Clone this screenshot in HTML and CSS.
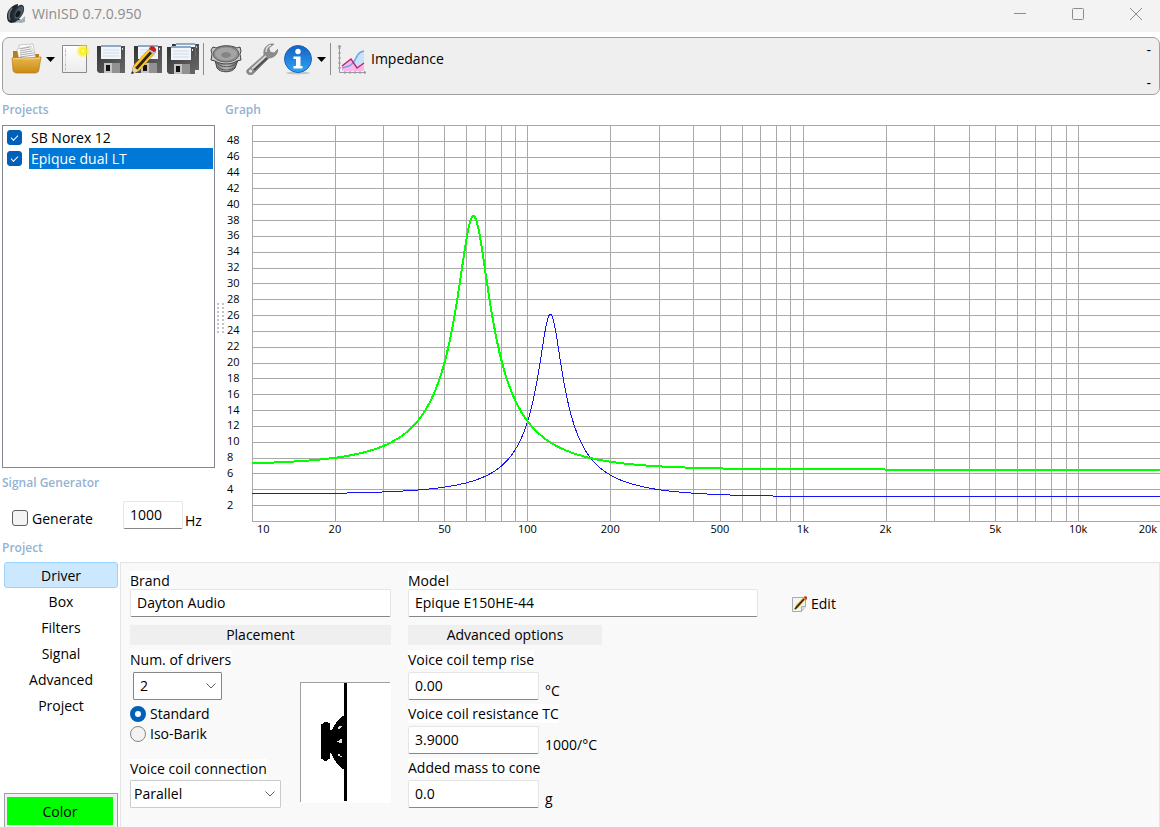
FILE: index.html
```
<!DOCTYPE html>
<html lang="en">
<head>
    <meta charset="UTF-8">
    <meta name="viewport" content="width=device-width, initial-scale=1.0">
    <title>WinISD 0.7.0.950</title>
    <link rel="stylesheet" href="styles.css">
</head>
<body>

    <header class="titlebar">
        <svg class="app-icon" width="20" height="20" viewBox="0 0 20 20">
            <path d="M12 0C6 1 1 6 1 12c0 4 1 6 4 7l7-1 3-2-4-2z" fill="#20262b"/>
            <path d="M6 4C3 7 2 12 4 16" stroke="#5f6e79" stroke-width="2" fill="none"/>
            <ellipse cx="12.500" cy="8.500" rx="4.500" ry="8.500" transform="rotate(28 12.500 8.500)" fill="#2c353d"/>
            <ellipse cx="13" cy="8.500" rx="3.200" ry="7" transform="rotate(28 13 8.500)" fill="#4d5962"/>
            <ellipse cx="12" cy="10" rx="2" ry="3.500" transform="rotate(28 12 10)" fill="#15191c"/>
            <path d="M9 18l3-2 3 0 4-4 0 6-4 1z" fill="#9fb2b1"/>
        </svg>
        <h1>WinISD 0.7.0.950</h1>
        <div class="window-buttons">
            <button aria-label="Minimize"><svg width="14" height="14"><path d="M1 6.500h12" /></svg></button>
            <button aria-label="Maximize"><svg width="14" height="14"><rect x="1.500" y="1.500" width="11" height="11" rx="1"/></svg></button>
            <button aria-label="Close"><svg width="14" height="14"><path d="M1 1l12 12M13 1L1 13"/></svg></button>
        </div>
    </header>

    <svg width="0" height="0" class="defs">
        <defs>
            <linearGradient id="gold" x1="0" y1="0" x2="0" y2="1"><stop offset="0" stop-color="#e9b84e"/><stop offset="1" stop-color="#c98a16"/></linearGradient>
            <linearGradient id="disk" x1="0" y1="0" x2="1" y2="1"><stop offset="0" stop-color="#333"/><stop offset="1" stop-color="#686868"/></linearGradient>
            <linearGradient id="paper" x1="0" y1="0" x2="0" y2="1"><stop offset="0" stop-color="#fff"/><stop offset="1" stop-color="#ececec"/></linearGradient>
            <linearGradient id="info" x1="0" y1="0" x2="0" y2="1"><stop offset="0" stop-color="#1561c0"/><stop offset="1" stop-color="#2fa5f6"/></linearGradient>
            <linearGradient id="metal" x1="0" y1="0" x2="1" y2="0"><stop offset="0" stop-color="#777"/><stop offset=".5" stop-color="#bbb"/><stop offset="1" stop-color="#666"/></linearGradient>
            <radialGradient id="star"><stop offset="0" stop-color="#fffbd0"/><stop offset=".4" stop-color="#fff000"/><stop offset="1" stop-color="#f8ef4a" stop-opacity="0.100"/></radialGradient>
            <symbol id="floppy" viewBox="0 0 28 29">
                <path d="M0 1h28v27H2l-2-2z" fill="url(#disk)"/>
                <path d="M4 0h20v14H4z" fill="#f2f6fb"/>
                <path d="M4 0h20v2H4z" fill="#8fa9c4"/>
                <path d="M6 5h16M6 8h16M6 11h16" stroke="#cfdcea"/>
                <path d="M7 18h16v10H7z" fill="#c4c4c4"/>
                <path d="M15 18h8v10h-8z" fill="#929292"/>
                <path d="M9 20h4v6H9z" fill="#111"/>
                <path d="M25 3h1v2h-1z" fill="#ddd"/>
            </symbol>
        </defs>
    </svg>

    <div class="toolbar">
        <button class="tool" aria-label="Open">
            <svg width="32" height="32" viewBox="0 0 32 32">
                <path d="M2 8h6l2 3h18v16H2z" fill="#b77d17"/>
                <path d="M8 2l14-1 3 16-17 1z" fill="#fff" stroke="#aaa" stroke-width=".600"/>
                <path d="M6 6l14-3 5 13H8z" fill="#fafafa" stroke="#bbb" stroke-width=".600"/>
                <path d="M9 6l10-2M9 8l11-2M9 10l12-2M9 12l13-2M9 14l14-2" stroke="#999" stroke-width=".800"/>
                <path d="M1 15c8-1 11 0 14 0l15-1-2 12c0 3-2 4-4 4H6c-2 0-4-1-4-3z" fill="url(#gold)" stroke="#b57c14" stroke-width=".700"/>
                <path d="M2 16c8-1 11 0 13 0l14-1" stroke="#f5d58c" fill="none"/>
            </svg>
            <svg class="arrow" width="9" height="5"><path d="M0 0h9L4.500 5z"/></svg>
        </button>
        <button class="tool" aria-label="New">
            <svg width="32" height="32" viewBox="0 0 32 32">
                <path d="M3.500 2.500h24v27h-24z" fill="url(#paper)" stroke="#8b8b8b"/>
                <path d="M6.500 5v23" stroke="#ddd"/>
                <path d="M6 8h1M6 12h1M6 22h1M6 26h1" stroke="#999"/>
                <circle cx="24" cy="8" r="7" fill="url(#star)"/>
            </svg>
        </button>
        <button class="tool" aria-label="Save"><svg width="32" height="32"><use href="#floppy" x="2" y="2" width="28" height="29"/></svg></button>
        <button class="tool" aria-label="Save as">
            <svg width="32" height="32" viewBox="0 0 32 32">
                <use href="#floppy" x="3" y="2" width="28" height="29"/>
                <path d="M19 5l6 4L8 28l-7 3 1-8z" fill="#2a2415"/>
                <path d="M19 5l2 1L4 25l-2-2zM23 8l2 1L8 28l-2-1z" fill="#ffc629"/>
                <path d="M2 23l6 5-7 3z" fill="#edd09a"/>
                <path d="M1 28l2 2-3 1z" fill="#222"/>
                <path d="M17 7l6 5 2-3-6-5z" fill="#b9bdbd"/>
                <path d="M19 4c2-3 7 1 6 4l-2 1-5-3z" fill="#cf1d1d"/>
            </svg>
        </button>
        <button class="tool" aria-label="Save all">
            <svg width="32" height="32" viewBox="0 0 32 32">
                <use href="#floppy" x="5" y="0" width="27" height="28"/>
                <use href="#floppy" x="0" y="3" width="28" height="29"/>
            </svg>
        </button>
        <span class="separator"></span>
        <button class="tool" aria-label="Driver database">
            <svg width="32" height="32" viewBox="0 0 32 32">
                <path d="M5 17l2 8c3 5 15 5 18 0l3-8z" fill="url(#metal)" stroke="#444"/>
                <path d="M7 20c4 5 15 5 19 0M8 24c4 4 13 4 17 0" fill="none" stroke="#555"/>
                <path d="M3 4l3 1C12 2 21 2 27 5l3-1 1 4-1 3 1 6-4 1c-6 4-16 4-22 0l-4-1 1-6-1-4z" fill="#c8c8c8" stroke="#444"/>
                <ellipse cx="16" cy="11" rx="13" ry="8" fill="#8a8a8a" stroke="#666"/>
                <ellipse cx="16" cy="11" rx="11" ry="6.500" fill="#a4a4a4"/>
                <ellipse cx="16" cy="12" rx="5" ry="3" fill="#858585"/>
            </svg>
        </button>
        <button class="tool" aria-label="Options">
            <svg width="32" height="32" viewBox="0 0 32 32">
                <path d="M1 27L18 12c-1-5 1-9 6-11l4 0-5 4 1 4 4 1 4-4c0 5-4 9-9 9L8 30c-3 4-9 1-7-3z" fill="#8b8b8b" stroke="#777" stroke-width=".600"/>
                <path d="M6 26L20 13" stroke="#d5d5d5" stroke-width="2"/>
                <path d="M8 27L21 15" stroke="#4c4c4c" stroke-width="2"/>
                <circle cx="4.500" cy="28" r="1.500" fill="#eee"/>
                <path d="M20 9c0-3 2-6 5-7" stroke="#ddd" stroke-width="1.500" fill="none"/>
            </svg>
        </button>
        <button class="tool" aria-label="Help">
            <svg width="32" height="32" viewBox="0 0 32 32">
                <ellipse cx="16" cy="30" rx="12" ry="1.500" fill="#c5c5c5"/>
                <circle cx="16" cy="16" r="13.500" fill="url(#info)" stroke="#1c63bb"/>
                <circle cx="16" cy="8.500" r="2.700" fill="#fff"/>
                <path d="M11.500 13.500h7v9.500h2v2.500h-9V23h2.500v-7h-2.500z" fill="#fff"/>
            </svg>
            <svg class="arrow" width="9" height="5"><path d="M0 0h9L4.500 5z"/></svg>
        </button>
        <span class="separator"></span>
        <button class="tool tool-text">
            <svg width="30" height="32" viewBox="0 0 30 32">
                <path d="M5 24c5-2 7 1 13-7 3-6 4-9 9-8v19H5z" fill="#c9e2fb"/>
                <path d="M5 23l8-7 6 9 8-5v8H5z" fill="#fbb7e9"/>
                <path d="M5 25c5-2 8 0 13-8 3-6 4-8 9-9" stroke="#6aa8f0" stroke-width="1.500" fill="none"/>
                <path d="M5 23l9-7 6 9 7-5" stroke="#c62368" stroke-width="1.500" fill="none"/>
                <path d="M2.500 2v27.500H29" stroke="#999" fill="none"/>
                <path d="M1 5h3M1 10h3M1 15h3M1 20h3M1 25h3M8 28v3M13 28v3M18 28v3M23 28v3M27 28l2 1.500-2 1.500M1 4l1.500-2L4 4" stroke="#999" fill="none"/>
            </svg>
            Impedance
        </button>
        <div class="readout"><span>-</span><span>-</span></div>
    </div>

    <main class="workspace">
        <aside class="sidebar">
            <h2>Projects</h2>
            <ul class="project-list">
                <li><input type="checkbox" id="p1" checked><label for="p1">SB Norex 12</label></li>
                <li class="selected"><input type="checkbox" id="p2" checked><label for="p2">Epique dual LT</label></li>
            </ul>
            <h2>Signal Generator</h2>
            <div class="generator">
                <input type="checkbox" id="generate">
                <label for="generate">Generate</label>
                <input type="text" class="field" id="freq" value="1000" aria-label="Frequency">
                <label class="unit" for="freq">Hz</label>
            </div>
        </aside>
        <div class="splitter"></div>
        <section class="graph">
            <h2>Graph</h2>
            <svg id="plot"></svg>
        </section>
    </main>

    <h2 class="project-title">Project</h2>
    <section class="project">
        <nav class="tabs">
            <button class="active">Driver</button>
            <button>Box</button>
            <button>Filters</button>
            <button>Signal</button>
            <button>Advanced</button>
            <button>Project</button>
            <div class="color-box"><button class="color">Color</button></div>
        </nav>

        <form class="panel">
            <div class="column placement">
                <label for="brand">Brand</label>
                <input type="text" class="field" id="brand" value="Dayton Audio">
                <h3>Placement</h3>
                <div class="placement-body">
                    <div class="placement-options">
                        <label for="drivers">Num. of drivers</label>
                        <select id="drivers" class="drivers">
                            <option>1</option>
                            <option selected>2</option>
                            <option>4</option>
                        </select>
                        <div class="radio"><input type="radio" name="mount" id="standard" checked><label for="standard">Standard</label></div>
                        <div class="radio"><input type="radio" name="mount" id="isobarik"><label for="isobarik">Iso-Barik</label></div>
                        <label for="connection" class="connection-label">Voice coil connection</label>
                        <select id="connection" class="connection">
                            <option>Parallel</option>
                            <option>Series</option>
                        </select>
                    </div>
                    <svg class="mount-picture" width="91" height="121" viewBox="0 0 91 121" shape-rendering="crispEdges">
                        <path d="M0 0h91v121H0z" fill="#fff"/>
                        <path d="M.500 120V.500H90" fill="none" stroke="#a0a0a0"/>
                        <path d="M44 1h3v118h-3z"/>
                        <path d="M21 42h2v-1h1v-1h4v1h2v7h2l2-4 4-6 2-1v-1l3-2h4v53h-4l-3-2-3-3-4-7-2-4h-1v6h-2v1h-1v1h-3v-1h-1v-1h-2z"/>
                        <path d="M38 46v-1h1v-1h3v1h-1v1h-1v1h-2zM37 59h2v-1h1v-1h2v4h-3v-1h-2zM38 72h2v2h2v1h-2v-1h-2z" fill="#ddd"/>
                    </svg>
                </div>
            </div>

            <div class="column model">
                <label for="model">Model</label>
                <input type="text" class="field" id="model" value="Epique E150HE-44">
                <div class="advanced">
                    <h3>Advanced options</h3>
                    <label for="temp">Voice coil temp rise</label>
                    <div class="measure"><input type="text" class="field" id="temp" value="0.00"><span class="unit">°C</span></div>
                    <label for="tc">Voice coil resistance TC</label>
                    <div class="measure"><input type="text" class="field" id="tc" value="3.9000"><span class="unit">1000/°C</span></div>
                    <label for="mass">Added mass to cone</label>
                    <div class="measure"><input type="text" class="field" id="mass" value="0.0"><span class="unit">g</span></div>
                </div>
            </div>

            <button type="button" class="edit">
                <svg width="16" height="16" viewBox="0 0 16 16">
                    <path d="M.500 1.500h13v9l-4 5h-9z" fill="#f4f4f4" stroke="#aaa"/>
                    <path d="M9.500 15.500v-5h4" fill="#ddd" stroke="#aaa"/>
                    <path d="M2 14l2-5 8-8 2 2-8 9z" fill="#d9a92c"/>
                    <path d="M3 13l9-10" stroke="#222" stroke-width="1.500"/>
                    <path d="M12 1l1-1 2 1v2l-1 1z" fill="#cc2b2b"/>
                </svg>
                Edit
            </button>
        </form>
    </section>

    <script src="graph.js"></script>
</body>
</html>
```
FILE: styles.css
```
* {
    box-sizing: border-box;
}

body {
    margin: 0;
    height: 100vh;
    min-height: 700px;
    display: flex;
    flex-direction: column;
    overflow: hidden;
    font-family: "Open Sans", "Segoe UI", sans-serif;
    font-size: 14px;
    line-height: 20px;
    color: #000;
    background: #fff;
}

button, input, select {
    font: inherit;
    color: inherit;
    margin: 0;
}

button {
    padding: 0;
    border: none;
    background: none;
}

h1, h2, h3 {
    margin: 0;
    font-weight: normal;
}

h2 {
    height: 30px;
    font-size: 12px;
    line-height: 30px;
    font-weight: 600;
    color: #94b2d2;
}

.defs {
    position: absolute;
}

/* title bar */
.titlebar {
    display: flex;
    align-items: center;
    height: 32px;
    flex: none;
    padding: 0 6px 4px;
    background: #f3f3f3;
}

.titlebar h1 {
    flex: 1;
    margin-left: 6px;
    font-size: 14px;
    color: #8c8c8c;
}

.window-buttons {
    display: flex;
    gap: 44px;
    padding-right: 11px;
}

.window-buttons button, .window-buttons svg {
    display: block;
}

.window-buttons svg {
    fill: none;
    stroke: #8c8c8c;
}

/* toolbar */
.toolbar {
    display: flex;
    align-items: flex-start;
    flex: none;
    height: 58px;
    margin: 5px 0 0 2px;
    padding: 5px 8px;
    border: 1px solid #a0a0a0;
    border-radius: 7px;
    background: #efefef;
}

.tool {
    display: flex;
    align-items: center;
    margin-right: 4px;
}

.arrow {
    margin-left: 3px;
}

.separator {
    width: 1px;
    height: 32px;
    margin-right: 6px;
    background: #8c8c8c;
}

.tool-text {
    gap: 4px;
}

.readout {
    display: flex;
    flex-direction: column;
    gap: 13px;
    margin-left: auto;
    margin-top: -3px;
}

/* upper half */
.workspace {
    display: flex;
    flex: 1;
    min-height: 0;
}

.sidebar {
    display: flex;
    flex-direction: column;
    width: 213px;
    margin-left: 2px;
}

.project-list {
    flex: 1;
    margin: 0;
    padding: 1px 1px 1px 4px;
    list-style: none;
    border: 1px solid #828790;
}

.project-list li {
    display: flex;
    align-items: center;
    gap: 7px;
    height: 21px;
}

.project-list label {
    flex: 1;
    padding-left: 2px;
    line-height: 21px;
}

.project-list .selected label {
    color: #fff;
    background: #0078d7;
}

input[type="checkbox"] {
    appearance: none;
    width: 15px;
    height: 15px;
    flex: none;
    border: 1px solid #5f5f5f;
    border-radius: 3px;
    background: #f3f3f3;
}

input[type="checkbox"]:checked {
    display: grid;
    place-items: center;
    border-color: #005fb8;
    background: #005fb8;
}

input[type="checkbox"]:checked::before {
    content: "";
    width: 6px;
    height: 3px;
    margin-bottom: 2px;
    border: solid #fff;
    border-width: 0 0 1px 1px;
    transform: rotate(-45deg);
}

.generator {
    display: flex;
    align-items: flex-start;
    height: 43px;
    padding: 3px 0 0 10px;
}

.generator input[type="checkbox"] {
    width: 16px;
    height: 16px;
    margin-top: 9px;
}

.generator label {
    margin-left: 4px;
    padding-top: 8px;
}

.generator .field {
    width: 60px;
    margin-left: auto;
}

.generator .unit {
    width: 30px;
    margin-left: 2px;
    padding-top: 10px;
}

/* two columns of grip dots */
.splitter {
    width: 7px;
    height: 30px;
    margin: auto 1px auto 2px;
    background:
        linear-gradient(90deg, transparent 2px, #fff 2px, #fff 5px, transparent 5px),
        repeating-linear-gradient(#c4c4c4 0 2px, #fff 2px 4px);
}

.graph {
    display: flex;
    flex-direction: column;
    flex: 1;
    min-width: 0;
}

#plot {
    flex: 1;
    width: 100%;
    min-height: 0;
    font-size: 11px;
}

#plot .grid {
    fill: none;
    stroke: #a9a9a9;
    shape-rendering: crispEdges;
}

#plot .curve {
    fill: none;
    shape-rendering: crispEdges;
}

/* lower half */
.project-title {
    height: 20px;
    flex: none;
    margin-left: 2px;
    line-height: 14px;
}

.project {
    display: flex;
    flex: none;
    height: 266px;
}

.tabs {
    display: flex;
    flex-direction: column;
    width: 114px;
    margin: 1px 2px 0 4px;
}

.tabs > button {
    height: 26px;
    padding-top: 1px;
}

.tabs > .active {
    border: 1px solid #99d1ff;
    border-radius: 3px;
    background: #cce8ff;
}

.color-box {
    margin-top: auto;
    padding: 3px 4px 2px 2px;
    border: 1px solid #a0a0a0;
    border-bottom: none;
    background: #f0f0f0;
}

.color {
    display: block;
    width: 100%;
    height: 28px;
    padding-top: 1px;
    background: #00ff00;
}

.panel {
    display: flex;
    align-items: flex-start;
    flex: 1;
    margin-top: 1px;
    padding: 8px 9px;
    border: 1px solid #e5e5e5;
    border-bottom: none;
    background: #f9f9f9;
}

.column {
    display: flex;
    flex-direction: column;
    align-items: flex-start;
}

.column label {
    background: #fff;
}

.placement {
    width: 261px;
    margin-right: 17px;
}

.model {
    width: 350px;
    margin-right: 34px;
}

.column > .field {
    width: 100%;
    margin-top: -2px;
}

.column h3 {
    width: 100%;
    margin: 8px 0 5px;
    font-size: 14px;
    text-align: center;
    background: #efefef;
}

.field {
    height: 28px;
    padding: 0 6px 1px;
    border: 1px solid #e5e5e5;
    border-bottom-color: #868686;
    border-radius: 2px;
    background: #fff;
}

.placement-body {
    display: flex;
    justify-content: space-between;
    width: 100%;
}

.placement-options {
    display: flex;
    flex-direction: column;
    align-items: flex-start;
}

select {
    appearance: none;
    height: 28px;
    padding: 0 6px;
    border: 1px solid #868686;
    border-radius: 1px;
    background: #fff url("data:image/svg+xml,%3Csvg xmlns='http://www.w3.org/2000/svg' width='10' height='6'%3E%3Cpath d='M.5.5l4.500 4.500L9.500.5' fill='none' stroke='%23606060'/%3E%3C/svg%3E") no-repeat right 5px center;
}

.drivers {
    width: 89px;
    margin: 2px 0 4px 3px;
}

.connection {
    width: 151px;
    margin-top: 1px;
    padding: 0 3px;
    border-color: #ccc;
}

.radio {
    display: flex;
    align-items: center;
    gap: 4px;
    height: 20px;
}

.radio label {
    background: none;
}

.connection-label {
    margin-top: 15px;
}

input[type="radio"] {
    appearance: none;
    width: 16px;
    height: 16px;
    border: 1px solid #868686;
    border-radius: 50%;
    background: #f3f3f3;
}

input[type="radio"]:checked {
    border: 5px solid #005fb8;
    background: #fff;
}

.mount-picture {
    margin-top: 32px;
}

.advanced {
    width: 194px;
}

.measure {
    display: flex;
    gap: 6px;
    margin: 2px 0 3px;
}

.measure .field {
    width: 131px;
}

.measure .unit {
    padding-top: 9px;
}

.edit {
    display: flex;
    align-items: center;
    gap: 3px;
    margin-top: 23px;
}
```
FILE: graph.js
```
const svg = document.getElementById("plot");

const LEFT = 27;      // room for the ohm labels
const BOTTOM = 20;    // room for the frequency labels
const F_MIN = 10, F_MAX = 20000, Z_MAX = 50;

const curves = [
    { color: "#1414f0", width: 1, f0: 121.2, peak: 26.1, low: 3.4, high: 3.05, q: 4.93 },
    { color: "#00ff00", width: 2, f0: 63.7, peak: 38.5, low: 7.1, high: 6.5, q: 3.6 }
];

// magnitude of a resistance in series with a parallel resonance
function impedance(c, f) {
    const re = f < c.f0 ? c.low : c.high;
    const u = c.q * (f / c.f0 - c.f0 / f);
    return Math.sqrt((c.peak ** 2 + (re * u) ** 2) / (1 + u * u));
}

function draw() {
    const w = svg.clientWidth - LEFT + 1;
    const h = svg.clientHeight - BOTTOM;
    const x = f => LEFT + w * Math.log(f / F_MIN) / Math.log(F_MAX / F_MIN);
    const y = z => h - h * z / Z_MAX;
    let grid = "", text = "", lines = "";

    for (let z = 0; z <= Z_MAX; z += 2) {
        const py = Math.round(y(z)) + 0.5;
        grid += `M${LEFT} ${py}H${LEFT + w}`;
        if (z > 0 && z < Z_MAX) {
            text += `<text x="2" y="${Math.floor(y(z)) + 4}">${z}</text>`;
        }
    }

    for (let decade = 10; decade <= F_MAX; decade *= 10) {
        for (let n = 1; n < 10 && n * decade <= F_MAX; n++) {
            const f = n * decade;
            grid += `M${Math.round(x(f)) + 0.5} 0V${h}`;
            if (n === 1 || n === 2 || n === 5) {
                const label = f >= 1000 ? f / 1000 + "k" : f;
                let anchor = "middle", px = x(f);
                if (f === F_MIN) { anchor = "start"; px += 5; }
                if (f === F_MAX) { anchor = "end"; px -= 4; }
                text += `<text x="${px}" y="${h + 12}" text-anchor="${anchor}">${label}</text>`;
            }
        }
    }

    curves.forEach(c => {
        const points = [];
        for (let px = 0; px <= w; px++) {
            const f = F_MIN * Math.pow(F_MAX / F_MIN, px / w);
            points.push(`${LEFT + px},${y(impedance(c, f)).toFixed(1)}`);
        }
        lines += `<polyline class="curve" stroke="${c.color}" stroke-width="${c.width}" points="${points.join(" ")}"/>`;
    });

    svg.innerHTML = `<path class="grid" d="${grid}"/>${lines}${text}`;
}

window.addEventListener("resize", draw);
draw();
```
